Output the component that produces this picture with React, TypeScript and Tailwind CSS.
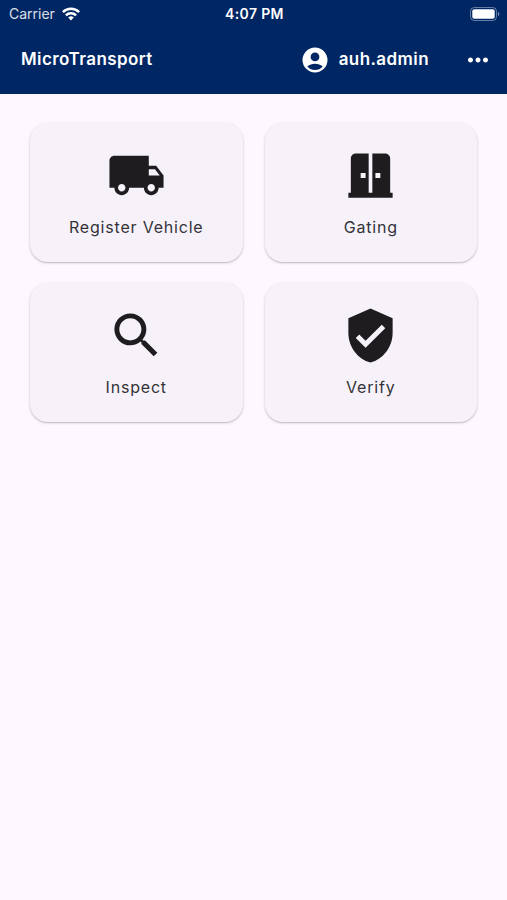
import type { IconType } from "react-icons";
import {
  MdDoorSliding,
  MdLocalShipping,
  MdMoreHoriz,
  MdSearch,
  MdVerifiedUser,
} from "react-icons/md";

type MenuItem = {
  label: string;
  icon: IconType;
};

const menuItems: MenuItem[] = [
  { label: "Register Vehicle", icon: MdLocalShipping },
  { label: "Gating", icon: MdDoorSliding },
  { label: "Inspect", icon: MdSearch },
  { label: "Verify", icon: MdVerifiedUser },
];

function WifiIcon() {
  return (
    <svg viewBox="0 0 18 14" className="w-[18px] h-[14px]" aria-hidden="true">
      <g fill="none" stroke="currentColor" strokeWidth="2.5">
        <path d="M0.9 5.1a11.5 11.5 0 0 1 16.2 0" />
        <path d="M3.9 8.4a7.2 7.2 0 0 1 10.2 0" />
      </g>
      <path d="M9 13.4l-2.8-2.8a4 4 0 0 1 5.6 0z" fill="currentColor" />
    </svg>
  );
}

function BatteryIcon() {
  return (
    <svg viewBox="0 0 30 14" className="w-[30px] h-[14px]" aria-hidden="true">
      <rect
        x="0.5"
        y="0.5"
        width="26"
        height="13"
        rx="3.8"
        fill="none"
        stroke="currentColor"
        strokeOpacity="0.4"
      />
      <rect x="2.3" y="2.3" width="22.4" height="9.4" rx="2" fill="currentColor" />
      <path d="M28 4.8c1.8.7 1.8 3.7 0 4.4z" fill="currentColor" fillOpacity="0.5" />
    </svg>
  );
}

function AccountIcon() {
  return (
    <svg viewBox="0 0 24 24" className="size-[30px]" aria-hidden="true">
      <path
        fill="currentColor"
        fillRule="evenodd"
        d="M12 2a10 10 0 1 0 0 20 10 10 0 0 0 0-20zm0 4a3.5 3.5 0 1 1 0 7 3.5 3.5 0 0 1 0-7zm0 14a8 8 0 0 1-6.14-2.88C7.55 15.8 9.68 15 12 15s4.45.8 6.14 2.12A8 8 0 0 1 12 20z"
      />
    </svg>
  );
}

function StatusBar() {
  return (
    <div className="grid grid-cols-3 items-center h-[27px] pl-[9px] pr-[7px]">
      <div className="flex items-center gap-[7px] text-sm text-white/85">
        Carrier
        <span className="text-white">
          <WifiIcon />
        </span>
      </div>
      <span className="text-center text-sm font-semibold tracking-wide">4:07 PM</span>
      <span className="justify-self-end">
        <BatteryIcon />
      </span>
    </div>
  );
}

function MenuCard({ label, icon: Icon }: MenuItem) {
  return (
    <button
      type="button"
      className="flex flex-col items-center h-[139px] pt-[23px] rounded-[18px] bg-[#f7f2fa] shadow-[0_1px_3px_rgba(0,0,0,0.18),0_1px_1px_rgba(0,0,0,0.1)]"
    >
      <Icon className="size-[59px] text-[#1e1c1f]" />
      <span className="mt-[10px] text-base leading-6 tracking-wider text-[#343238]">
        {label}
      </span>
    </button>
  );
}

export default function App() {
  return (
    <div className="min-h-screen bg-[#fef7ff] font-['Inter','Liberation_Sans',sans-serif]">
      <header className="pb-[2px] bg-[#002664] text-white">
        <StatusBar />
        <div className="flex items-center justify-between h-[65px] pl-[21px] pr-[14px]">
          <h1 className="text-[17px] font-semibold tracking-wide">MicroTransport</h1>
          <div className="flex items-center gap-[34px]">
            <button
              type="button"
              className="flex items-center gap-[9px] text-[17px] font-semibold tracking-wide"
            >
              <AccountIcon />
              auh.admin
            </button>
            <button type="button" aria-label="More options">
              <MdMoreHoriz className="size-[30px]" />
            </button>
          </div>
        </div>
      </header>

      <main className="grid grid-cols-2 gap-x-[22px] gap-y-[21px] px-[30px] pt-[29px]">
        {menuItems.map((item) => (
          <MenuCard key={item.label} {...item} />
        ))}
      </main>
    </div>
  );
}
